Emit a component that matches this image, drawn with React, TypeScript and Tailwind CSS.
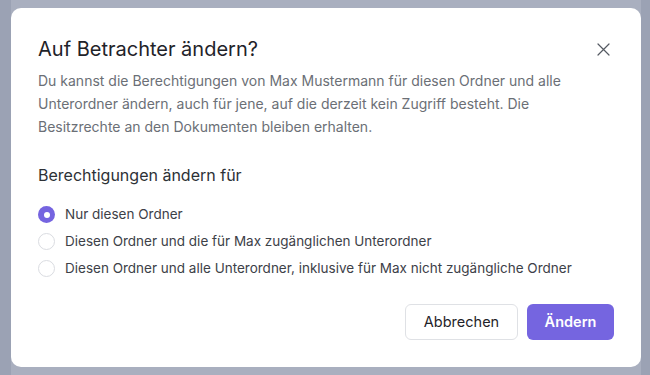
import React, { useState } from "react";

const options = [
  "Nur diesen Ordner",
  "Diesen Ordner und die für Max zugänglichen Unterordner",
  "Diesen Ordner und alle Unterordner, inklusive für Max nicht zugängliche Ordner",
];

export default function App() {
  const [sel, setSel] = useState(0);
  return (
    <div
      className="w-[650px] h-[375px] overflow-hidden bg-[linear-gradient(to_right,#9ba2b4_11px,#a9afbf_11px,#a9afbf_641px,#9ba2b4_641px)] pt-[8px] pl-[11px]"
      style={{ fontFamily: "Inter, 'Noto Sans', sans-serif" }}
    >
      <div className="w-[630px] bg-white rounded-[10px] pt-[27px] px-[27px] pb-[27px]">
        <div className="flex items-center justify-between">
          <h2 className="text-[20px] leading-[28px] text-[#1f2329] font-normal">
            Auf Betrachter ändern?
          </h2>
          <button className="w-[24px] h-[24px] flex items-center justify-center mr-[-1px] text-[#555a62]">
            <svg width="13" height="13" viewBox="0 0 13 13" fill="none">
              <path d="M1 1L12 12M12 1L1 12" stroke="currentColor" strokeWidth="1.2" strokeLinecap="round" />
            </svg>
          </button>
        </div>
        <p className="mt-[6px] text-[14px] leading-[23px] text-[#6b6f76]">
          Du kannst die Berechtigungen von Max Mustermann für diesen Ordner und alle Unterordner ändern, auch für jene, auf die derzeit kein Zugriff besteht. Die Besitzrechte an den Dokumenten bleiben erhalten.
        </p>
        <div className="mt-[25px] text-[16px] leading-[24px] text-[#2d3136]">
          Berechtigungen ändern für
        </div>
        <div className="mt-[14px] flex flex-col">
          {options.map((o, i) => (
            <label
              key={i}
              className="flex items-center h-[27px] cursor-pointer"
              onClick={() => setSel(i)}
            >
              {sel === i ? (
                <span className="w-[17px] h-[17px] rounded-full bg-[#7564e0] flex items-center justify-center">
                  <span className="w-[6px] h-[6px] rounded-full bg-white" />
                </span>
              ) : (
                <span className="w-[17px] h-[17px] rounded-full border border-[#dadce1] bg-white" />
              )}
              <span className="ml-[10px] text-[13.5px] text-[#3d4148]">{o}</span>
            </label>
          ))}
        </div>
        <div className="mt-[22px] flex justify-end gap-[9px]">
          <button className="h-[36px] w-[113px] rounded-[6px] border border-[#dfe1e5] bg-white text-[14.5px] text-[#1f2329]">
            Abbrechen
          </button>
          <button className="h-[36px] w-[87px] rounded-[6px] bg-[#7565e0] text-[14.5px] font-semibold text-white">
            Ändern
          </button>
        </div>
      </div>
    </div>
  );
}
